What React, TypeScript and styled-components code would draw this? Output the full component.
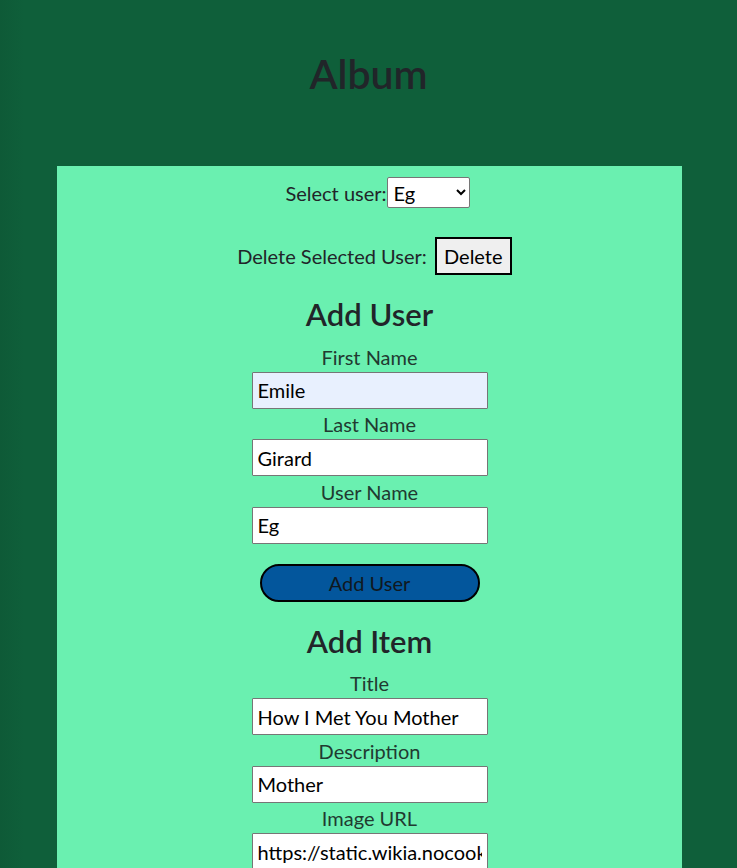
import React from "react";
import styled, { createGlobalStyle } from "styled-components";

const Global = createGlobalStyle`
  html, body { margin: 0; padding: 0; }
  body {
    background: #0f5f3a;
    font-family: Lato, "Noto Sans", sans-serif;
    color: #212529;
  }
`;

const Page = styled.div`
  height: 868px;
  overflow: hidden;
  background: linear-gradient(90deg, #0e5a37 0px, #0f5f3a 24px, #0f5f3a 100%);
`;

const Header = styled.header`
  height: 166px;
  display: flex;
  align-items: center;
  justify-content: center;
  padding-bottom: 20px;
  box-sizing: border-box;
`;

const Title = styled.h1`
  margin: 0;
  font-size: 41px;
  font-weight: 600;
  color: #212529;
`;

const Panel = styled.main`
  margin-left: 57px;
  width: 625px;
  background: #6af0b0;
  text-align: center;
  padding-bottom: 20px;
`;

const Row = styled.div<{ $shift: number; $top: number }>`
  display: flex;
  align-items: center;
  justify-content: center;
  padding-left: ${(p) => p.$shift}px;
  padding-top: ${(p) => p.$top}px;
  font-size: 20px;
`;

const RowLabel = styled.span<{ $gap: number }>`
  margin-right: ${(p) => p.$gap}px;
`;

const Select = styled.select`
  width: 83px;
  height: 31px;
  font-family: inherit;
  font-size: 20px;
  color: #000;
  background: #fff;
  border: 1px solid #767676;
  border-radius: 2px;
  padding: 0 2px;
`;

const DeleteButton = styled.button`
  width: 77px;
  height: 38px;
  font-family: inherit;
  font-size: 20px;
  color: #000;
  background: #efefef;
  border: 2px solid #000;
  padding: 0;
`;

const SectionTitle = styled.h2`
  margin: 20px 0 9.5px;
  font-size: 31px;
  line-height: 38px;
  font-weight: 600;
  color: #212529;
`;

const Field = styled.div`
  margin-bottom: 1.5px;
`;

const Label = styled.label`
  display: block;
  font-size: 20px;
  line-height: 29px;
  color: #213a30;
`;

const Input = styled.input<{ $filled?: boolean }>`
  display: block;
  box-sizing: border-box;
  margin: 0 auto;
  width: 236px;
  height: 37px;
  padding: 0 5px;
  font-family: inherit;
  font-size: 20px;
  color: #000;
  background: ${(p) => (p.$filled ? "#e8f0fe" : "#fff")};
  border: 1px solid #767676;
  border-radius: 1px;
  outline: none;
`;

const PillButton = styled.button`
  display: block;
  margin: 20px auto 0;
  width: 220px;
  height: 38px;
  border-radius: 19px;
  background: #03569c;
  border: 2px solid #000;
  font-family: inherit;
  font-size: 20px;
  color: #101820;
  padding: 0;
`;

export default function App() {
  return (
    <>
      <Global />
      <Page>
        <Header>
          <Title>Album</Title>
        </Header>
        <Panel>
          <Row $shift={16} $top={11}>
            <RowLabel $gap={0}>Select user:</RowLabel>
            <Select defaultValue="Eg">
              <option value="Eg">Eg</option>
            </Select>
          </Row>
          <Row $shift={10} $top={29}>
            <RowLabel $gap={8}>Delete Selected User:</RowLabel>
            <DeleteButton>Delete</DeleteButton>
          </Row>

          <SectionTitle>Add User</SectionTitle>
          <Field>
            <Label>First Name</Label>
            <Input $filled defaultValue="Emile" />
          </Field>
          <Field>
            <Label>Last Name</Label>
            <Input defaultValue="Girard" />
          </Field>
          <Field>
            <Label>User Name</Label>
            <Input defaultValue="Eg" />
          </Field>
          <PillButton>Add User</PillButton>

          <SectionTitle>Add Item</SectionTitle>
          <Field>
            <Label>Title</Label>
            <Input defaultValue="How I Met You Mother" />
          </Field>
          <Field>
            <Label>Description</Label>
            <Input defaultValue="Mother" />
          </Field>
          <Field>
            <Label>Image URL</Label>
            <Input defaultValue="https://static.wikia.nocookie.net/himym/images/mother.jpg" />
          </Field>
        </Panel>
      </Page>
    </>
  );
}
